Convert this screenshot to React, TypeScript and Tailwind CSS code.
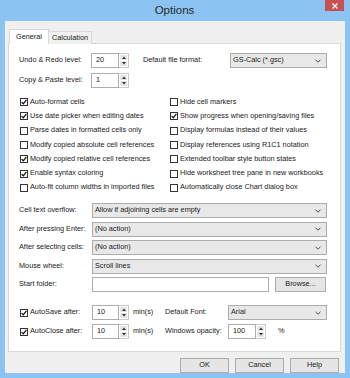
import React from 'react'

// ── Small widgets ─────────────────────────
function Check({ checked }: { checked: boolean }) {
  return (
    <div className="w-[8px] h-[8px] shrink-0 border border-[#333] bg-white flex items-center justify-center">
      {checked && (
        <svg width="6" height="6" viewBox="0 0 6 6">
          <path d="M0.6 3.1 L2.3 4.8 L5.4 0.9" fill="none" stroke="#111" strokeWidth="1.3" />
        </svg>
      )}
    </div>
  )
}

function CheckRow({ label, checked }: { label: string; checked: boolean }) {
  return (
    <div className="flex items-center gap-[2px] h-[14.3px] whitespace-nowrap">
      <Check checked={checked} />
      <span>{label}</span>
    </div>
  )
}

function Chevron() {
  return (
    <svg width="6" height="4" viewBox="0 0 6 4" className="shrink-0">
      <path d="M0.5 0.8 L3 3.2 L5.5 0.8" fill="none" stroke="#555" strokeWidth="1" />
    </svg>
  )
}

function Select({ value, className }: { value: string; className: string }) {
  return (
    <div className={`h-[15px] flex items-center justify-between border border-[#acacac] bg-[#e8e8e8] pl-[2px] pr-[5px] ${className}`}>
      <span>{value}</span>
      <Chevron />
    </div>
  )
}

function Spin({ value, className }: { value: string; className: string }) {
  return (
    <div className={`h-[15px] flex ${className}`}>
      <div className="flex-1 flex items-center border border-[#abadb3] bg-white pl-[4px]">{value}</div>
      <div className="w-[10px] flex flex-col border border-l-0 border-[#c9c9c9] bg-white p-[1px] gap-[1px]">
        <div className="flex-1 bg-[#e6e6e6] flex items-center justify-center">
          <svg width="4" height="3" viewBox="0 0 4 3"><path d="M0 3 L2 0.5 L4 3 Z" fill="#333" /></svg>
        </div>
        <div className="flex-1 bg-[#e6e6e6] flex items-center justify-center">
          <svg width="4" height="3" viewBox="0 0 4 3"><path d="M0 0 L2 2.5 L4 0 Z" fill="#333" /></svg>
        </div>
      </div>
    </div>
  )
}

function Button({ label }: { label: string }) {
  return (
    <div className="w-[49px] h-[15px] border border-[#acacac] bg-[#e5e5e5] flex items-center justify-center">
      {label}
    </div>
  )
}

// ── Page ──────────────────────────────────
export default function App() {
  const leftChecks = [
    { label: 'Auto-format cells', checked: true },
    { label: 'Use date picker when editing dates', checked: true },
    { label: 'Parse dates in formatted cells only', checked: false },
    { label: 'Modify copied absolute cell references', checked: false },
    { label: 'Modify copied relative cell references', checked: true },
    { label: 'Enable syntax coloring', checked: true },
    { label: 'Auto-fit column widths in imported files', checked: false },
  ]
  const rightChecks = [
    { label: 'Hide cell markers', checked: false },
    { label: 'Show progress when opening/saving files', checked: true },
    { label: 'Display formulas instead of their values', checked: false },
    { label: 'Display references using R1C1 notation', checked: false },
    { label: 'Extended toolbar style button states', checked: false },
    { label: 'Hide worksheet tree pane in new workbooks', checked: false },
    { label: 'Automatically close Chart dialog box', checked: false },
  ]
  const selects = [
    { label: 'Cell text overflow:', value: 'Allow if adjoining cells are empty' },
    { label: 'After pressing Enter:', value: '(No action)' },
    { label: 'After selecting cells:', value: '(No action)' },
    { label: 'Mouse wheel:', value: 'Scroll lines' },
  ]

  return (
    <div className="w-[350px] h-[378px] bg-[#8cc3f2] flex flex-col font-['Liberation_Sans',Arial,sans-serif] text-[7.3px] text-[#1a1a1a]">

      {/* Title bar */}
      <div className="h-[21px] shrink-0 flex items-start">
        <div className="flex-1 h-full flex items-center justify-center pl-[24px] text-[11.5px] text-[#2a2a2a]">
          Options
        </div>
        <div className="w-[19px] h-[11px] mr-[6px] bg-[#c75050] flex items-center justify-center">
          <svg width="6" height="6" viewBox="0 0 6 6">
            <path d="M0.5 0.5 L5.5 5.5 M5.5 0.5 L0.5 5.5" stroke="#fff" strokeWidth="1.3" />
          </svg>
        </div>
      </div>

      {/* Client area */}
      <div className="mx-[5px] h-[352px] bg-[#f0f0f0] flex flex-col pl-[3px] pr-[4px]">

        {/* Tabs */}
        <div className="flex items-end h-[19px] pl-[1px] mt-[4px] -mb-[1px] relative">
          <div className="h-[15px] px-[6px] flex items-center border border-b-0 border-[#d9d9d9] bg-white">General</div>
          <div className="h-[13px] px-[3px] flex items-center border border-l-0 border-b-0 border-[#d9d9d9] bg-[#f0f0f0]">Calculation</div>
        </div>

        {/* Panel */}
        <div className="h-[309px] border border-[#d9d9d9] bg-white pl-[10px] pt-[9px]">

          <div className="flex items-center h-[15px]">
            <span className="w-[72px]">Undo &amp; Redo level:</span>
            <Spin value="20" className="w-[38px]" />
            <span className="ml-[14px] w-[87px]">Default file format:</span>
            <Select value="GS-Calc (*.gsc)" className="w-[97px]" />
          </div>

          <div className="flex items-center h-[15px] mt-[5px]">
            <span className="w-[72px]">Copy &amp; Paste level:</span>
            <Spin value="1" className="w-[38px]" />
          </div>

          {/* Check boxes */}
          <div className="grid grid-cols-[150px_1fr] mt-[7px] ml-[1px]">
            <div className="flex flex-col">
              {leftChecks.map((c) => <CheckRow key={c.label} {...c} />)}
            </div>
            <div className="flex flex-col">
              {rightChecks.map((c) => <CheckRow key={c.label} {...c} />)}
            </div>
          </div>

          {/* Dropdown rows */}
          <div className="flex flex-col gap-[3.5px] mt-[8px]">
            {selects.map((s) => (
              <div key={s.label} className="flex items-center h-[15px]">
                <span className="w-[73px]">{s.label}</span>
                <Select value={s.value} className="w-[235px]" />
              </div>
            ))}
            <div className="flex items-center h-[15px]">
              <span className="w-[73px]">Start folder:</span>
              <div className="w-[177px] h-[15px] border border-[#abadb3] bg-white" />
              <div className="ml-[6px] w-[51px] h-[15px] border border-[#acacac] bg-[#e5e5e5] flex items-center justify-center">Browse...</div>
            </div>
          </div>

          {/* AutoSave / AutoClose */}
          <div className="flex flex-col gap-[4px] mt-[13px] ml-[1px]">
            <div className="flex items-center h-[15px]">
              <Check checked />
              <span className="ml-[2px] w-[62px]">AutoSave after:</span>
              <Spin value="10" className="w-[37px]" />
              <span className="ml-[4px] w-[32px]">min(s)</span>
              <span className="w-[63px]">Default Font:</span>
              <Select value="Arial" className="w-[99px]" />
            </div>
            <div className="flex items-center h-[15px]">
              <Check checked />
              <span className="ml-[2px] w-[62px]">AutoClose after:</span>
              <Spin value="10" className="w-[37px]" />
              <span className="ml-[4px] w-[32px]">min(s)</span>
              <span className="w-[63px]">Windows opacity:</span>
              <Spin value="100" className="w-[38px]" />
              <span className="ml-[12px]">%</span>
            </div>
          </div>
        </div>

        {/* Buttons */}
        <div className="flex justify-end gap-[6px] mt-[6px] pr-[2px]">
          <Button label="OK" />
          <Button label="Cancel" />
          <Button label="Help" />
        </div>
      </div>
    </div>
  )
}
